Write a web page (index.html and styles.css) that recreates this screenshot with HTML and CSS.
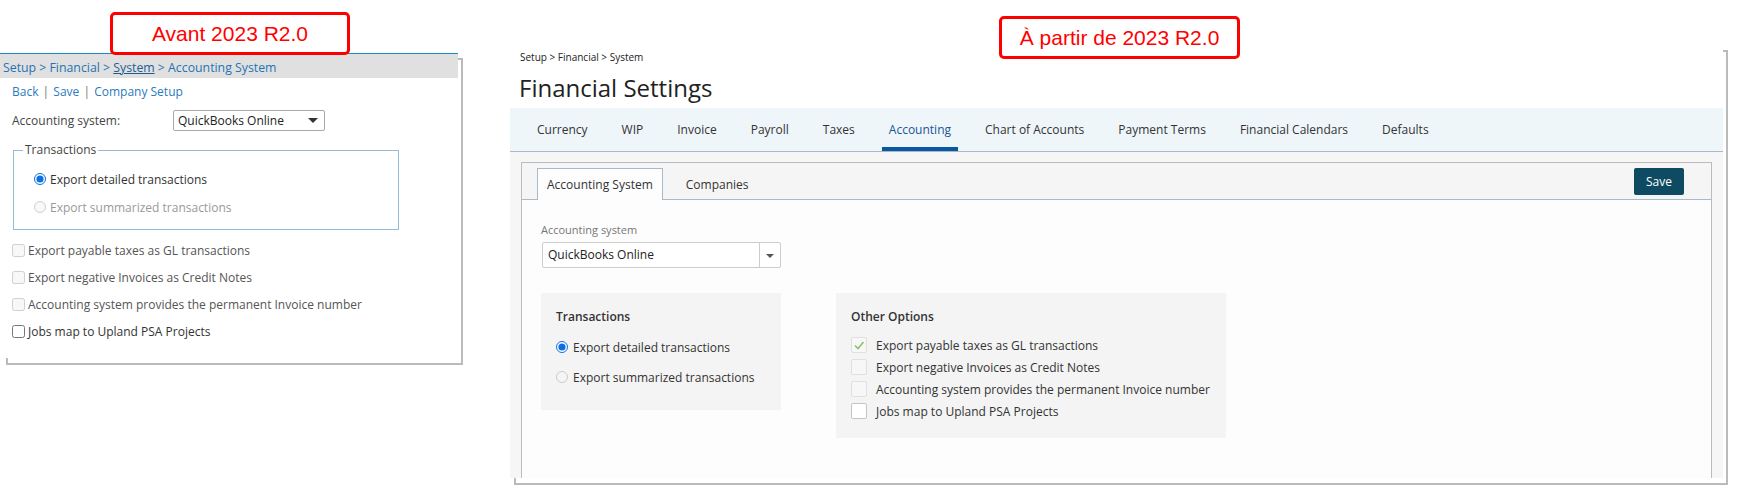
FILE: index.html
```html
<!DOCTYPE html>
<html lang="en">
<head>
<meta charset="UTF-8">
<meta name="viewport" content="width=device-width, initial-scale=1.0">
<title>Accounting System - before / after</title>
<link rel="stylesheet" href="styles.css">
</head>
<body>
  <div class="tag tag-old">Avant 2023 R2.0</div>
  <div class="tag tag-new">À partir de 2023 R2.0</div>

  <!-- old screen -->
  <div class="frame frame-old">
    <div class="old">
      <div class="old-crumbs">Setup &gt; Financial &gt; <a class="crumb-link">System</a> &gt; Accounting System</div>
      <div class="old-links">
        <a>Back</a> <span class="sep">|</span> <a>Save</a> <span class="sep">|</span> <a>Company Setup</a>
      </div>
      <div class="old-field">
        <label class="old-label">Accounting system:</label>
        <div class="old-select">QuickBooks Online<span class="caret"></span></div>
      </div>
      <fieldset class="old-group">
        <legend>Transactions</legend>
        <label class="old-opt"><input type="radio" name="old-tr" checked>Export detailed transactions</label>
        <label class="old-opt off"><input type="radio" name="old-tr" disabled>Export summarized transactions</label>
      </fieldset>
      <label class="old-check"><input type="checkbox" disabled>Export payable taxes as GL transactions</label>
      <label class="old-check"><input type="checkbox" disabled>Export negative Invoices as Credit Notes</label>
      <label class="old-check"><input type="checkbox" disabled>Accounting system provides the permanent Invoice number</label>
      <label class="old-check on"><input type="checkbox">Jobs map to Upland PSA Projects</label>
    </div>
  </div>

  <!-- new screen -->
  <div class="frame frame-new">
    <div class="new">
      <div class="crumbs">Setup &gt; Financial &gt; System</div>
      <h1>Financial Settings</h1>
      <nav class="tabs">
        <a class="tab">Currency</a>
        <a class="tab">WIP</a>
        <a class="tab">Invoice</a>
        <a class="tab">Payroll</a>
        <a class="tab">Taxes</a>
        <a class="tab active">Accounting</a>
        <a class="tab">Chart of Accounts</a>
        <a class="tab">Payment Terms</a>
        <a class="tab">Financial Calendars</a>
        <a class="tab">Defaults</a>
      </nav>
      <div class="tab-area">
        <div class="panel">
          <div class="panel-head">
            <div class="subtab active">Accounting System</div>
            <div class="subtab">Companies</div>
            <button class="save">Save</button>
          </div>
          <div class="panel-body">
            <div class="field-label">Accounting system</div>
            <div class="select">
              <span class="select-value">QuickBooks Online</span>
              <span class="select-btn"><span class="caret small"></span></span>
            </div>
            <div class="boxes">
              <div class="box box-trans">
                <div class="box-title">Transactions</div>
                <label class="opt"><input type="radio" name="new-tr" checked>Export detailed transactions</label>
                <label class="opt"><input type="radio" name="new-tr" disabled>Export summarized transactions</label>
              </div>
              <div class="box box-other">
                <div class="box-title">Other Options</div>
                <div class="chk"><span class="cb dim"><svg width="14" height="14" viewBox="0 0 14 14"><path d="M3 7.5 L6 10.5 L11.5 4" fill="none" stroke="#8cc36f" stroke-width="1.6"/></svg></span>Export payable taxes as GL transactions</div>
                <div class="chk"><span class="cb dim"></span>Export negative Invoices as Credit Notes</div>
                <div class="chk"><span class="cb dim"></span>Accounting system provides the permanent Invoice number</div>
                <div class="chk"><span class="cb"></span>Jobs map to Upland PSA Projects</div>
              </div>
            </div>
          </div>
        </div>
      </div>
    </div>
  </div>
</body>
</html>
```

FILE: styles.css
```css
body {
  margin: 0;
  position: relative;
  display: flex;
  align-items: flex-start;
  font-family: "Open Sans", "Liberation Sans", sans-serif;
  font-size: 12px;
  color: #333;
  background-color: #fff;
}

/* red version labels */
.tag {
  position: absolute;
  box-sizing: border-box;
  height: 43px;
  border: 3px solid #f00;
  border-radius: 5px;
  background-color: #fff;
  color: #f00;
  font-family: "Liberation Sans", Arial, sans-serif;
  font-size: 21px;
  line-height: 37px;
  text-align: center;
  z-index: 2;
}
.tag-old {
  left: 110px;
  top: 12px;
  width: 240px;
}
.tag-new {
  left: 999px;
  top: 16px;
  width: 241px;
}

/* shadowed frames round each screen */
.frame {
  box-sizing: border-box;
  border: 2px solid #bbb;
}
.frame-old {
  margin: 58px 0 0 6px;
  width: 457px;
  height: 307px;
}
.frame-new {
  margin: 50px 0 0 51px;
  width: 1214px;
  height: 435px;
}

/* old screen */
.old {
  box-sizing: border-box;
  margin: -7px 0 0 -8px;
  width: 458px;
  height: 305px;
  background-color: #fff;
  border-top: 1px solid #1a8ac6;
}
.old-crumbs {
  box-sizing: border-box;
  height: 24px;
  padding: 4px 0 0 3px;
  line-height: 20px;
  font-size: 12.3px;
  background-color: #e0e0e0;
  color: #1f74b3;
}
.crumb-link {
  color: #1d5f92;
  text-decoration: underline;
}
.old-links {
  margin-top: 4px;
  padding-left: 12px;
  line-height: 20px;
  color: #2b7bbd;
}
.old-links .sep {
  margin: 0 1px;
  color: #777;
}
.old-field {
  display: flex;
  align-items: center;
  margin-top: 8px;
  height: 21px;
}
.old-label {
  box-sizing: border-box;
  width: 173px;
  padding-left: 12px;
  color: #444;
}
.old-select {
  position: relative;
  box-sizing: border-box;
  width: 152px;
  height: 21px;
  padding-left: 4px;
  line-height: 19px;
  border: 1px solid #a9a9a9;
  border-radius: 2px;
  color: #222;
}
.caret {
  position: absolute;
  right: 6px;
  top: 7px;
  width: 0;
  height: 0;
  border-left: 5px solid transparent;
  border-right: 5px solid transparent;
  border-top: 5px solid #333;
}
.old-group {
  box-sizing: border-box;
  margin: 11px 0 0 13px;
  width: 386px;
  padding: 0 0 12px 9px;
  border: 1px solid #94bcd9;
}
.old-group legend {
  padding: 0 2px;
  line-height: 16px;
  color: #444;
}
.old-opt {
  display: flex;
  align-items: center;
  gap: 4px;
  height: 20px;
  margin: 8px 0 0 11px;
  color: #333;
}
.old-opt:first-of-type {
  margin-top: 11px;
}
.old-opt.off {
  color: #999;
}
.old-opt input {
  margin: 0;
  width: 12px;
  height: 12px;
  accent-color: #0b6fe0;
}
.old-check {
  display: flex;
  align-items: center;
  gap: 3px;
  height: 20px;
  margin: 7px 0 0 12px;
  color: #555;
  white-space: nowrap;
}
.old-group + .old-check {
  margin-top: 10px;
}
.old-check.on {
  color: #333;
}
.old-check input {
  margin: 0;
  width: 13px;
  height: 13px;
}

/* new screen */
.new {
  box-sizing: border-box;
  display: flex;
  flex-direction: column;
  margin: -7px 0 0 -6px;
  width: 1213px;
  height: 433px;
  background-color: #fff;
}
.crumbs {
  padding: 5px 10px 0;
  font-size: 10px;
  line-height: 14px;
  color: #222;
}
h1 {
  margin: 8px 0 4px 9px;
  font-size: 24px;
  font-weight: 400;
  line-height: 32px;
  color: #222;
}
.tabs {
  display: flex;
  gap: 20px;
  height: 43px;
  padding-left: 20px;
  border-bottom: 1px solid #a9b9cc;
  background-color: #eef6fa;
}
.tab {
  padding: 0 7px;
  line-height: 44px;
  color: #333;
}
.tab.active {
  color: #1a5597;
  box-shadow: inset 0 -4px 0 #0b57a4;
}
.tab-area {
  flex: 1;
  display: flex;
  flex-direction: column;
  padding: 10px 11px 0;
  background-color: #f6f6f6;
}
.panel {
  flex: 1;
  border: 1px solid #bbb;
  border-bottom: none;
  background-color: #fdfdfd;
}
.panel-head {
  display: flex;
  align-items: flex-end;
  height: 36px;
  padding: 0 27px 0 15px;
  border-bottom: 1px solid #a9b9cc;
  background-color: #f5f5f5;
}
.subtab {
  box-sizing: border-box;
  height: 32px;
  margin-bottom: -1px;
  padding: 0 9px;
  line-height: 31px;
  border: 1px solid transparent;
  border-bottom: none;
  color: #333;
}
.subtab.active {
  border-color: #a9b9cc;
  background-color: #fdfdfd;
}
.subtab + .subtab {
  margin-left: 13px;
}
.save {
  align-self: center;
  margin-left: auto;
  width: 50px;
  height: 27px;
  border: none;
  border-radius: 2px;
  background-color: #0e4a62;
  color: #fff;
  font-family: inherit;
  font-size: 12px;
}
.panel-body {
  padding: 22px 0 0 19px;
}
.field-label {
  font-size: 11px;
  line-height: 15px;
  color: #777;
}
.select {
  box-sizing: border-box;
  display: flex;
  margin: 5px 0 0 1px;
  width: 239px;
  height: 26px;
  border: 1px solid #ccc;
  border-radius: 2px;
  background-color: #fff;
}
.select-value {
  flex: 1;
  padding-left: 5px;
  line-height: 24px;
  color: #222;
}
.select-btn {
  position: relative;
  width: 20px;
  border-left: 1px solid #ccc;
}
.caret.small {
  right: 6px;
  top: 11px;
  border-left-width: 4px;
  border-right-width: 4px;
  border-top: 4px solid #555;
}
.boxes {
  display: flex;
  align-items: flex-start;
  gap: 55px;
  margin-top: 25px;
}
.box {
  box-sizing: border-box;
  padding: 15px 15px 0;
  background-color: #f4f4f4;
}
.box-trans {
  width: 240px;
  height: 117px;
}
.box-other {
  width: 390px;
  height: 145px;
}
.box-title {
  line-height: 17px;
  font-weight: 600;
  color: #333;
}
.opt {
  display: flex;
  align-items: center;
  gap: 5px;
  height: 22px;
  margin-top: 8px;
  color: #333;
  white-space: nowrap;
}
.box-title + .opt {
  margin-top: 11px;
}
.opt input {
  margin: 0;
  width: 12px;
  height: 12px;
  accent-color: #0b6fe0;
}
.chk {
  display: flex;
  align-items: center;
  gap: 9px;
  height: 22px;
  color: #333;
  white-space: nowrap;
}
.box-title + .chk {
  margin-top: 9px;
}
.cb {
  box-sizing: border-box;
  display: flex;
  align-items: center;
  justify-content: center;
  width: 16px;
  height: 16px;
  border: 1px solid #c4c4c4;
  border-radius: 2px;
  background-color: #fff;
}
.cb.dim {
  border-color: #e0e0e0;
  background-color: #f7f7f7;
}
```
